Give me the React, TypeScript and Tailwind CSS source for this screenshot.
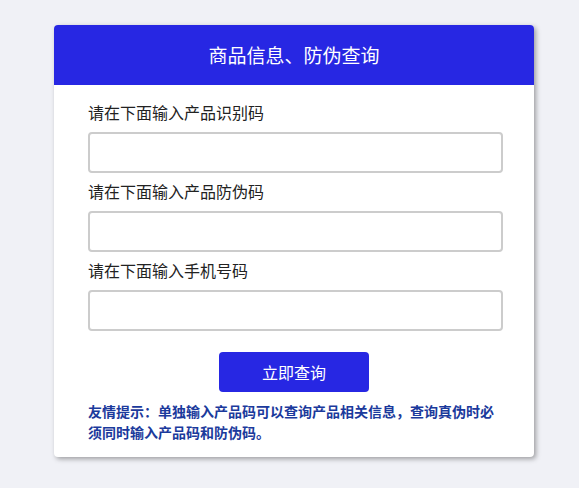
import React, { useState } from 'react'

const fields = [
  { key: 'code', label: '请在下面输入产品识别码' },
  { key: 'anti', label: '请在下面输入产品防伪码' },
  { key: 'phone', label: '请在下面输入手机号码' },
]

const App: React.FC = () => {
  const [values, setValues] = useState<Record<string, string>>({})

  return (
    <div
      className="min-h-[488px] bg-[#f0f1f6] pt-[25px]"
      style={{ fontFamily: '"Noto Sans CJK SC", "Noto Sans", sans-serif' }}
    >
      <div className="ml-[54px] w-[480px] overflow-hidden rounded-[4px] bg-white shadow-[2px_2px_5px_rgba(0,0,0,0.35)]">
        {/* 头部 */}
        <div className="flex h-[60px] items-center justify-center bg-[#2727e3] text-[19px] text-white">
          商品信息、防伪查询
        </div>

        {/* 表单 */}
        <div className="flex flex-col px-[34px] pt-[16px] pb-[14px]">
          {fields.map((f) => (
            <div key={f.key} className="mb-[7px]">
              <div className="mb-[9px] text-[16px] leading-[22px] text-[#222]">{f.label}</div>
              <input
                value={values[f.key] || ''}
                onChange={(e) => setValues({ ...values, [f.key]: e.target.value })}
                className="block h-[41px] w-[415px] rounded-[4px] border-2 border-[#cccccc] bg-white px-2 outline-none"
              />
            </div>
          ))}

          <div className="mt-[14px] flex justify-center">
            <button className="h-[40px] w-[150px] rounded-[4px] bg-[#2727e3] text-[16px] text-white">
              立即查询
            </button>
          </div>

          <p className="mt-[9px] w-[415px] text-[14px] font-bold leading-[21px] text-[#1b3a9c]">
            友情提示：单独输入产品码可以查询产品相关信息，查询真伪时必须同时输入产品码和防伪码。
          </p>
        </div>
      </div>
    </div>
  )
}

export default App
